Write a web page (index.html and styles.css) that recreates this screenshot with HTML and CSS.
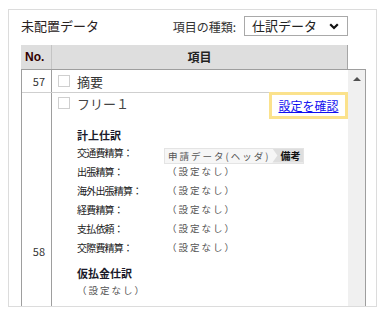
FILE: index.html
```html
<!DOCTYPE html>
<html lang="ja">
<head>
<meta charset="utf-8">
<link rel="stylesheet" href="styles.css">
</head>
<body>
<div class="panel">
  <div class="toolbar">
    <h2 class="title">未配置データ</h2>
    <div class="type">
      <span class="type-label">項目の種類:</span>
      <span class="select">仕訳データ<svg class="chev" width="10" height="7" viewBox="0 0 10 7"><path d="M1.2 1.2 L5 5 L8.8 1.2" fill="none" stroke="#111" stroke-width="2.2"/></svg></span>
    </div>
  </div>
  <div class="grid-head">
    <div class="h-no">No.</div>
    <div class="h-item">項目</div>
  </div>
  <div class="grid-body">
    <div class="rows">
      <div class="row r57">
        <div class="no">57</div>
        <div class="item item-57"><span class="cb"></span><span class="name">摘要</span></div>
      </div>
      <div class="row r58">
        <div class="no">58</div>
        <div class="item">
          <div class="item-head">
            <span class="cb cb-58"></span><span class="name name-58">フリー１</span>
            <span class="confirm"><a class="confirm-link" href="#">設定を確認</a></span>
          </div>
          <div class="detail">
            <div class="sec-title">計上仕訳</div>
            <dl class="map">
              <dt>交通費精算：</dt>
              <dd><span class="chip"><span class="chip-src">申請データ(ヘッダ)</span><span class="chip-field">備考</span></span></dd>
              <dt>出張精算：</dt><dd class="none">（設定なし）</dd>
              <dt>海外出張精算：</dt><dd class="none">（設定なし）</dd>
              <dt>経費精算：</dt><dd class="none">（設定なし）</dd>
              <dt>支払依頼：</dt><dd class="none">（設定なし）</dd>
              <dt>交際費精算：</dt><dd class="none">（設定なし）</dd>
            </dl>
            <div class="sec-title sec-2">仮払金仕訳</div>
            <div class="none none-2">（設定なし）</div>
          </div>
        </div>
      </div>
    </div>
    <div class="scrollbar"><span class="up"></span></div>
  </div>
</div>
</body>
</html>
```

FILE: styles.css
```css
* { box-sizing: border-box; }
html, body { margin: 0; padding: 0; background: #fff; }
body { font-family: "Noto Sans CJK JP", "Noto Sans", sans-serif; color: #333; }

.panel {
  margin: 9px 0 0 8px;
  width: 369px;
  height: 298px;
  border: 1px solid #dcdcdc;
  overflow: hidden;
  padding-left: 12px;
}

.toolbar {
  display: flex;
  align-items: center;
  justify-content: space-between;
  width: 327px;
  height: 20px;
  margin-top: 6px;
  margin-bottom: 9px;
}
.title {
  margin: 0;
  font-size: 13px;
  font-weight: normal;
  color: #2a2222;
  line-height: 20px;
  margin-top: -1px;
}
.type { display: flex; align-items: center; gap: 8px; }
.type-label { font-size: 12px; color: #333; }
.select {
  display: flex;
  align-items: center;
  justify-content: space-between;
  width: 104px;
  height: 20px;
  border: 1px solid #a9a9a9;
  padding: 0 8px 0 7px;
  font-size: 13px;
  color: #222;
  line-height: 18px;
}
.chev { display: block; }

.grid-head {
  display: flex;
  width: 327px;
  height: 24px;
  background: #dedede;
  border-right: 1px solid #a6a6a6;
  font-weight: bold;
  color: #222;
}
.h-no {
  width: 31px;
  border-right: 1px solid #c4c4c4;
  font-family: "Liberation Sans", Arial, sans-serif;
  font-size: 12px;
  line-height: 24px;
  padding-left: 4px;
  color: #300;
}
.h-item {
  flex: 1;
  text-align: center;
  font-size: 12px;
  line-height: 24px;
}

.grid-body {
  display: flex;
  width: 345px;
  border: 1px solid #9e9e9e;
}
.rows { width: 326px; }
.row { display: flex; }
.r57 { height: 23px; border-bottom: 1px solid #cfcfcf; }
.r58 { min-height: 316px; }
.no {
  width: 30px;
  border-right: 1px solid #9e9e9e;
  display: flex;
  align-items: center;
  justify-content: flex-end;
  padding-right: 6px;
  font-size: 11px;
  color: #333;
}
.item { flex: 1; padding-left: 6px; }
.item-57 { display: flex; align-items: center; gap: 7px; }
.cb {
  display: inline-block;
  width: 12px;
  height: 12px;
  border: 1px solid #cfcfcf;
  background: #fff;
  flex: none;
}
.name { font-size: 13px; color: #333; }

.item-head { display: flex; align-items: flex-start; height: 26px; }
.cb-58 { margin-top: 4px; }
.name-58 { margin-left: 7px; line-height: 22px; flex: 1; color: #444; }
.confirm {
  display: flex;
  align-items: center;
  justify-content: center;
  width: 79px;
  height: 27px;
  border: 3px solid #fbe28c;
  background: #fff;
  margin-top: -1px;
}
.confirm-link {
  font-size: 12px;
  color: #1010f0;
  text-decoration: underline;
  line-height: 16px;
}

.detail { margin-left: 19px; }
.sec-title {
  margin-top: 8px;
  font-size: 11px;
  font-weight: bold;
  line-height: 16px;
  color: #1a1a2a;
}
.map {
  display: grid;
  grid-template-columns: 87px 1fr;
  grid-auto-rows: 19px;
  margin: 0;
  align-items: center;
}
.map dt {
  font-size: 10px;
  letter-spacing: -0.8px;
  color: #222;
}
.map dd { margin: 0; padding-left: 3px; }
.none {
  font-size: 9.5px;
  letter-spacing: 2px;
  color: #555;
  line-height: 19px;
}
.map dd.none { line-height: 19px; }
.chip {
  display: inline-flex;
  height: 16px;
  margin-left: -3px;
  border: 1px solid #e4e4e4;
  background: #f6f6f6;
}
.chip-src {
  font-size: 9.5px;
  letter-spacing: 2px;
  color: #555;
  line-height: 14px;
  padding: 0 2px 0 3px;
}
.chip-field {
  background: #dedede;
  font-size: 10px;
  font-weight: bold;
  color: #111;
  line-height: 14px;
  padding: 0 3px 0 8px;
  clip-path: polygon(0 0, 100% 0, 100% 100%, 0 100%, 5px 50%);
}
.sec-2 { margin-top: 8px; }
.none-2 { padding-left: 0; }

.scrollbar {
  width: 17px;
  background: #f0f0f0;
  display: flex;
  justify-content: center;
}
.up {
  margin-top: 7px;
  width: 0;
  height: 0;
  border-left: 4px solid transparent;
  border-right: 4px solid transparent;
  border-bottom: 4px solid #505050;
}
```
